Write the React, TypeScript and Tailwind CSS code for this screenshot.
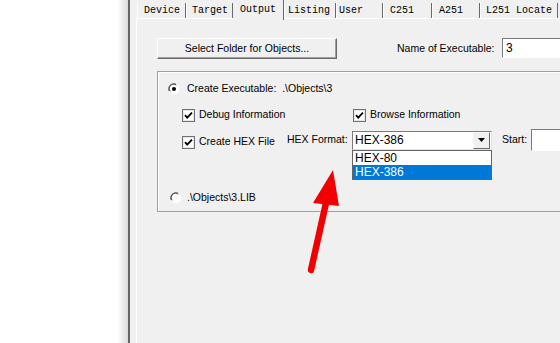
import React from "react";

const tabs = [
  { label: "Device", w: "w-[49px]", pl: "pl-[6px]" },
  { label: "Target", w: "w-[47px]", pl: "pl-[5px]" },
  { label: "Output", w: "w-[51px]", pl: "pl-[7px]", active: true },
  { label: "Listing", w: "w-[52px]", pl: "pl-[3px]" },
  { label: "User", w: "w-[47px]", pl: "pl-[2px]" },
  { label: "C251", w: "w-[49px]", pl: "pl-[6px]" },
  { label: "A251", w: "w-[48px]", pl: "pl-[6px]" },
  { label: "L251 Locate", w: "w-[78px]", pl: "pl-[5px]" },
];

function CheckBox() {
  return (
    <svg width="13" height="13" viewBox="0 0 13 13" className="shrink-0">
      <rect x="0.5" y="0.5" width="12" height="12" fill="#fff" stroke="#707070" />
      <rect x="1.5" y="1.5" width="10" height="10" fill="none" stroke="#e8e8e8" />
      <path d="M3 6.2 L5.2 8.6 L10 3.6" fill="none" stroke="#000" strokeWidth="1.8" />
    </svg>
  );
}

function Radio({ checked }: { checked?: boolean }) {
  return (
    <svg width="12" height="12" viewBox="0 0 12 12" className="shrink-0">
      <circle cx="6" cy="6" r="5.3" fill="#fff" />
      <path d="M1.2 8 A5.3 5.3 0 0 1 8 1.2" fill="none" stroke="#808080" strokeWidth="1.3" />
      <path d="M2.3 8.4 A4.2 4.2 0 0 1 8.4 2.3" fill="none" stroke="#404040" strokeWidth="0.9" />
      {checked && <circle cx="6" cy="6" r="2" fill="#000" />}
    </svg>
  );
}

export default function App() {
  return (
    <div className="relative flex h-[343px] w-[560px] overflow-hidden bg-white font-['Liberation_Sans',Arial,sans-serif] text-[10.5px] text-black">
      {/* window behind */}
      <div className="w-[118px] shrink-0 bg-white" />
      <div className="w-[10px] shrink-0 bg-gradient-to-r from-white to-[#dadada]" />
      <div className="w-[2px] shrink-0 bg-[#666]" />

      {/* dialog */}
      <div className="flex min-w-0 flex-1 flex-col bg-[#f0f0f0] pl-[6px]">
        {/* tabs */}
        <div className="relative z-10 ml-px flex h-[18px] font-['Liberation_Mono',monospace] text-[10px]">
          {tabs.map((t) =>
            t.active ? (
              <div
                key={t.label}
                className={`${t.w} ${t.pl} -mb-[2px] flex h-[20px] shrink-0 items-start border-r border-r-[#696969] bg-[#f0f0f0] pt-[2px]`}
              >
                {t.label}
              </div>
            ) : (
              <div
                key={t.label}
                className={`${t.w} ${t.pl} mt-[3px] flex h-[15px] shrink-0 items-center border-l border-r border-l-white border-r-[#696969] whitespace-nowrap`}
              >
                {t.label}
              </div>
            ),
          )}
        </div>

        {/* tab pane */}
        <div className="flex flex-1 flex-col border-l border-t border-white pl-[20px] pt-[19px]">
          <div className="flex h-[21px] items-center">
            <button className="h-[21px] w-[180px] shrink-0 border border-b-[#696969] border-l-white border-r-[#696969] border-t-white bg-[#f0f0f0] shadow-[inset_-1px_-1px_0_#a0a0a0]">
              Select Folder for Objects...
            </button>
            <span className="ml-[60px] w-[105px] shrink-0">Name of Executable:</span>
            <div className="-mt-[2px] flex h-[20px] w-[80px] shrink-0 items-center border border-b-white border-l-[#7a7a7a] border-r-white border-t-[#7a7a7a] bg-white pl-[3px] text-[12px]">
              3
            </div>
          </div>

          {/* group box */}
          <div className="mt-[12px] w-[420px] border border-[#a0a0a0] pb-[6px] shadow-[inset_1px_1px_0_#fff]">
            <div className="ml-[10px] mt-[10px] flex h-[14px] items-center gap-[7px]">
              <Radio checked />
              <span>Create Executable:&nbsp; .\Objects\3</span>
            </div>

            <div className="ml-[24px] mt-[12px] flex h-[14px] items-center">
              <div className="flex w-[171px] shrink-0 items-center gap-[4px]">
                <CheckBox />
                <span>Debug Information</span>
              </div>
              <div className="flex items-center gap-[4px]">
                <CheckBox />
                <span>Browse Information</span>
              </div>
            </div>

            <div className="relative ml-[24px] mt-[7px] flex h-[22px] items-center">
              <div className="flex w-[105px] shrink-0 items-center gap-[4px] pt-[4px]">
                <CheckBox />
                <span>Create HEX File</span>
              </div>
              <span className="w-[65px] shrink-0">HEX Format:</span>
              <div className="relative flex h-[19px] w-[140px] shrink-0 items-center border border-b-[#e3e3e3] border-l-[#7a7a7a] border-r-[#e3e3e3] border-t-[#7a7a7a] bg-white">
                <span className="flex-1 pl-[2px] text-[12px]">HEX-386</span>
                <div className="mr-px flex h-[17px] w-[17px] items-center justify-center border border-b-[#696969] border-l-[#f8f8f8] border-r-[#696969] border-t-[#f8f8f8] bg-[#f0f0f0]">
                  <svg width="7" height="4" viewBox="0 0 7 4">
                    <path d="M0 0 H7 L3.5 4 Z" fill="#000" />
                  </svg>
                </div>
                {/* open list */}
                <div className="absolute left-[-1px] top-[18px] z-20 w-[140px] border border-[#646464] bg-white text-[12px] leading-[14px]">
                  <div className="h-[14px] pl-[2px]">HEX-80</div>
                  <div className="h-[14px] bg-[#0078d7] pl-[2px] text-white">HEX-386</div>
                </div>
              </div>
              <span className="ml-[10px] w-[29px] shrink-0">Start:</span>
              <div className="h-[22px] w-[40px] shrink-0 border border-b-white border-l-[#7a7a7a] border-r-white border-t-[#7a7a7a] bg-white" />
            </div>

            <div className="ml-[12px] mt-[40px] flex h-[14px] items-center gap-[5px]">
              <Radio />
              <span>.\Objects\3.LIB</span>
            </div>
          </div>
        </div>
      </div>

      {/* red annotation arrow */}
      <svg className="pointer-events-none absolute left-0 top-0" width="560" height="343" viewBox="0 0 560 343">
        <polygon points="333,170 313,203 339,206" fill="#f20000" />
        <line x1="326" y1="203" x2="311" y2="270" stroke="#f20000" strokeWidth="6.5" strokeLinecap="round" />
      </svg>
    </div>
  );
}
